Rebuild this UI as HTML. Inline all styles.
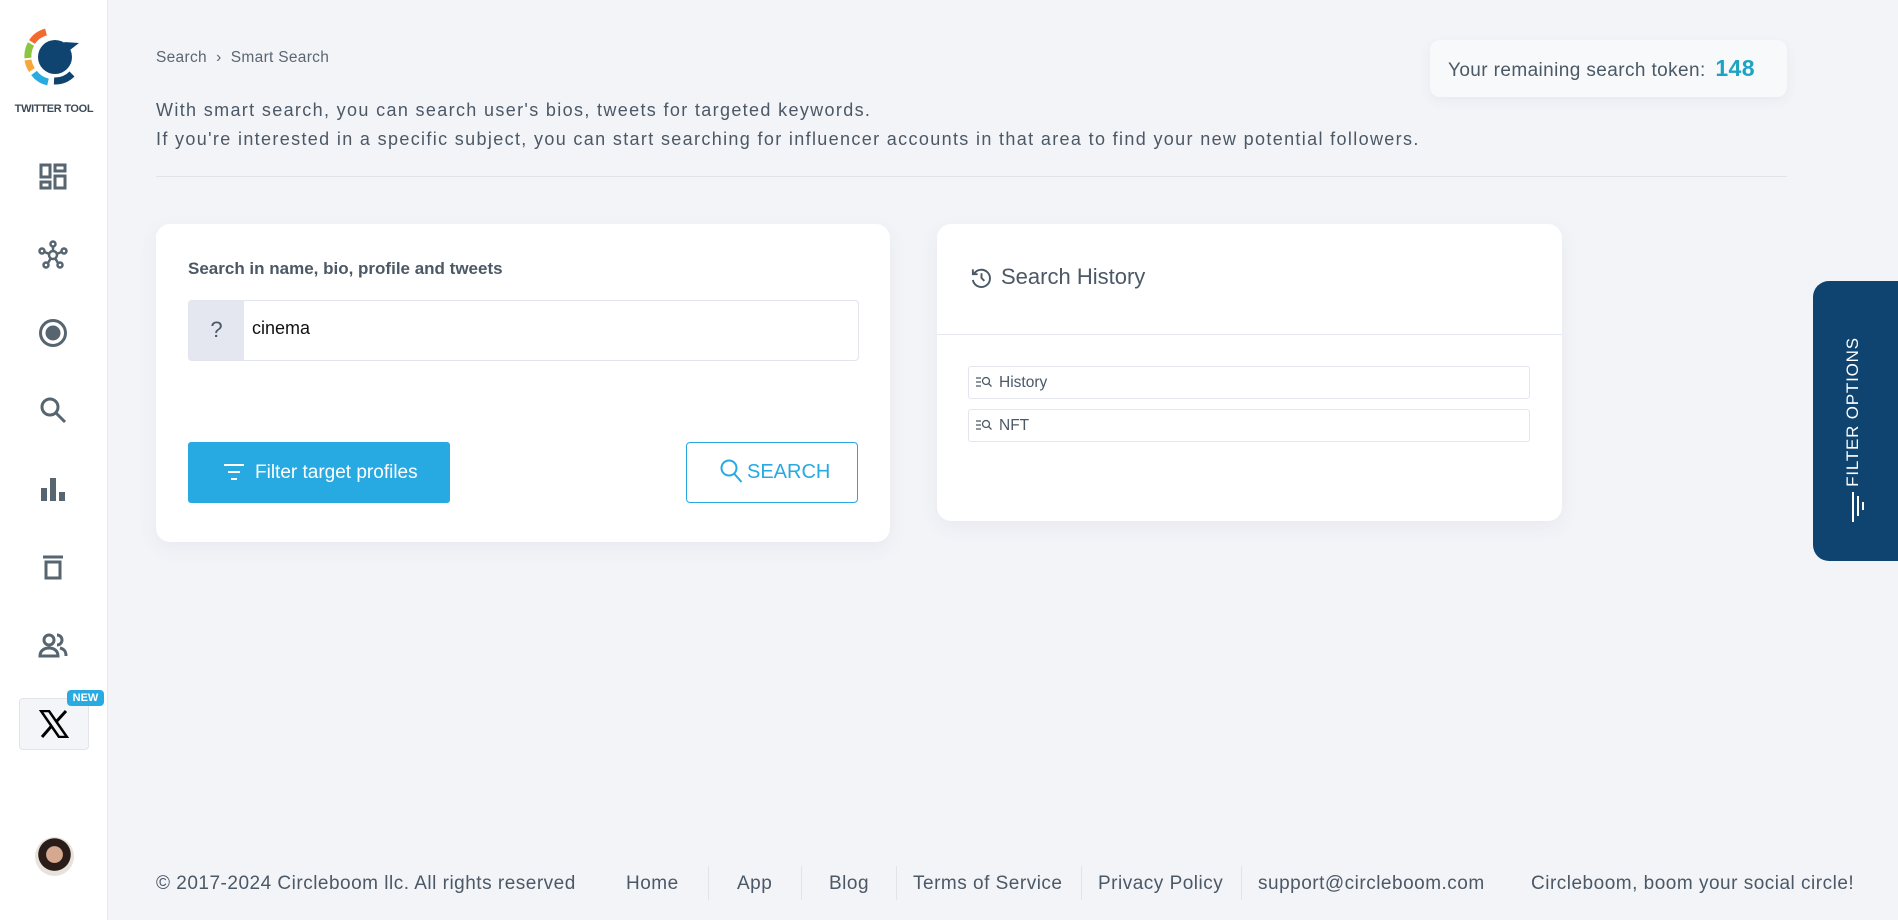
<!DOCTYPE html>
<html><head><meta charset="utf-8"><style>
*{box-sizing:border-box;margin:0;padding:0}
body{width:1898px;height:920px;background:#f3f4f8;font-family:"Liberation Sans",sans-serif;color:#4b5866;position:relative;overflow:hidden}
.a{position:absolute}
.side{left:0;top:0;width:108px;height:920px;background:#fff;border-right:1px solid #e6e7ef}
.ic{position:absolute;left:38px;width:30px;height:30px}
.card{background:#fff;border-radius:14px;box-shadow:0 6px 20px rgba(60,70,100,.06)}
.foot{top:873px;font-size:19px;color:#4b5866;white-space:nowrap;letter-spacing:.5px}
.sep{top:866px;width:1px;height:34px;background:#e2e4ea}
</style></head><body>
<div class="a side">
  <svg class="a" style="left:24px;top:28px" width="58" height="62" viewBox="0 0 58 62">
    <path d="M8 14 A24 24 0 0 1 22 4" stroke="#f26a2e" stroke-width="7" fill="none"/>
    <path d="M4 30 A24 24 0 0 1 7 16" stroke="#8cc63f" stroke-width="7" fill="none"/>
    <path d="M8 42 A24 24 0 0 1 4 32" stroke="#f7a83b" stroke-width="7" fill="none"/>
    <path d="M24 54 A24 24 0 0 1 10 45" stroke="#29abe2" stroke-width="7" fill="none"/>
    <circle cx="31" cy="29" r="17" fill="#0f4470"/>
    <path d="M40 14 L55 15 L46 22Z" fill="#0f4470"/>
    <path d="M30 53 A24 24 0 0 0 48 46" stroke="#0f4470" stroke-width="7" fill="none"/>
  </svg>
  <div class="a" style="left:0;width:108px;top:103px;text-align:center;font-size:11px;font-weight:bold;color:#3d4a57;letter-spacing:-.3px">TWITTER TOOL</div>
  <svg class="ic" style="top:162px" viewBox="0 0 30 30" fill="none" stroke="#56656f" stroke-width="3"><rect x="3" y="3" width="9" height="12"/><rect x="3" y="20" width="9" height="6"/><rect x="17" y="3" width="10" height="6"/><rect x="17" y="14" width="10" height="12"/></svg>
  <svg class="ic" style="top:240px" viewBox="0 0 30 30" fill="none" stroke="#56656f" stroke-width="2.5"><circle cx="15" cy="15" r="4"/><circle cx="15" cy="4" r="2.5"/><circle cx="4" cy="11" r="2.5"/><circle cx="26" cy="11" r="2.5"/><circle cx="8" cy="25" r="2.5"/><circle cx="22" cy="25" r="2.5"/><path d="M15 7v4M6.5 12l5 2M23.5 12l-5 2M10 23l3-5M20 23l-3-5"/></svg>
  <svg class="ic" style="top:318px" viewBox="0 0 30 30"><circle cx="15" cy="15" r="12.5" fill="none" stroke="#56656f" stroke-width="3"/><circle cx="15" cy="15" r="7.5" fill="#56656f"/></svg>
  <svg class="ic" style="top:395px" viewBox="0 0 30 30" fill="none" stroke="#56656f" stroke-width="3"><circle cx="12" cy="12" r="8"/><path d="M18 18l9 9"/></svg>
  <svg class="ic" style="top:474px" viewBox="0 0 30 30" fill="#56656f"><rect x="3" y="14" width="6" height="13"/><rect x="12" y="4" width="6" height="23"/><rect x="21" y="18" width="6" height="9"/></svg>
  <svg class="ic" style="top:552px" viewBox="0 0 30 30" fill="none" stroke="#56656f" stroke-width="3"><path d="M5 5h20"/><rect x="8" y="10" width="14" height="16"/></svg>
  <svg class="ic" style="top:630px" viewBox="0 0 30 30" fill="none" stroke="#56656f" stroke-width="3"><circle cx="11" cy="10" r="5"/><path d="M2 26c0-6 5-8 9-8s9 2 9 8z"/><path d="M19 5a5 5 0 0 1 0 10M22 18c4 1 6 3 6 8"/></svg>
  <div class="a" style="left:19px;top:698px;width:70px;height:52px;border:1px solid #e2e4ea;border-radius:4px;background:#f4f5f9"></div>
  <svg class="a" style="left:39px;top:710px" width="30" height="28" viewBox="0 0 30 28"><path d="M2 1h8l18 26h-8z" fill="none" stroke="#000" stroke-width="2.5"/><path d="M27 1L17 12M3 27l10-11.5" stroke="#000" stroke-width="3"/></svg>
  <div class="a" style="left:67px;top:690px;width:37px;height:16px;background:#29abe2;border-radius:4px;color:#fff;font-size:11px;font-weight:bold;text-align:center;line-height:16px">NEW</div>
  <div class="a" style="left:35px;top:837px;width:39px;height:39px;border-radius:50%;background:radial-gradient(circle at 50% 45%,#d7a890 0 28%,#2a1c18 30% 55%,#e8e2dc 57%)"></div>
</div>

<div class="a" style="left:156px;top:49px;font-size:15.5px;color:#5a6672;letter-spacing:.3px">Search &nbsp;›&nbsp; Smart Search</div>
<div class="a" style="left:156px;top:96px;font-size:18px;line-height:29px;color:#4b5866;letter-spacing:1.35px;white-space:nowrap">With smart search, you can search user's bios, tweets for targeted keywords.<br>If you're interested in a specific subject, you can start searching for influencer accounts in that area to find your new potential followers.</div>
<div class="a" style="left:156px;top:176px;width:1631px;height:1px;background:#e2e4ea"></div>
<div class="a" style="left:1430px;top:40px;width:357px;height:57px;background:#f8f9fb;border-radius:10px;box-shadow:0 4px 12px rgba(60,70,100,.06);font-size:19px;line-height:57px;padding-left:18px;color:#4b5866;letter-spacing:.4px;white-space:nowrap">Your remaining search token: <b style="color:#1ea3c4;font-size:23px;margin-left:4px">148</b></div>

<div class="a card" style="left:156px;top:224px;width:734px;height:318px">
  <div class="a" style="left:32px;top:35px;font-size:17px;font-weight:bold;color:#4b5866">Search in name, bio, profile and tweets</div>
  <div class="a" style="left:32px;top:76px;width:671px;height:61px;border:1px solid #e2e4ee;border-radius:4px;overflow:hidden">
    <div class="a" style="left:0;top:0;width:55px;height:61px;background:#e4e6f0;text-align:center;line-height:58px;font-size:22px;color:#4b5866">?</div>
    <div class="a" style="left:63px;top:17px;font-size:18px;color:#111">cinema</div>
  </div>
  <div class="a" style="left:32px;top:218px;width:262px;height:61px;background:#27a9e1;border-radius:3px;color:#fff;font-size:19px;line-height:61px;padding-left:67px">Filter target profiles</div>
  <svg class="a" style="left:68px;top:239px" width="20" height="18" viewBox="0 0 20 18" stroke="#fff" stroke-width="2"><path d="M0 2h20M4 9h12M7 16h6"/></svg>
  <div class="a" style="left:530px;top:218px;width:172px;height:61px;border:1px solid #27a9e1;border-radius:4px;color:#27a9e1;font-size:20px;line-height:59px;padding-left:60px">SEARCH</div>
  <svg class="a" style="left:564px;top:235px" width="24" height="26" viewBox="0 0 24 26" fill="none" stroke="#27a9e1" stroke-width="2"><circle cx="9" cy="9" r="7.5"/><path d="M14.5 15l7 8"/></svg>
</div>

<div class="a card" style="left:937px;top:224px;width:625px;height:297px">
  <svg class="a" style="left:33px;top:42px" width="23" height="24" viewBox="0 0 24 24" fill="none" stroke="#4b5866" stroke-width="2"><path d="M4 8a9 9 0 1 1-1 6"/><path d="M3 3v5h5"/><path d="M12 7v5l3 3"/></svg>
  <div class="a" style="left:64px;top:40px;font-size:22px;color:#4b5866">Search History</div>
  <div class="a" style="left:0;top:110px;width:625px;height:1px;background:#e6e7f0"></div>
  <div class="a" style="left:31px;top:142px;width:562px;height:33px;border:1px solid #e4e5ef;border-radius:3px;font-size:15.5px;line-height:31px;padding-left:30px">History</div>
  <div class="a" style="left:31px;top:185px;width:562px;height:33px;border:1px solid #e4e5ef;border-radius:3px;font-size:15.5px;line-height:31px;padding-left:30px">NFT</div>
  <svg class="a" style="left:39px;top:152px" width="17" height="12" viewBox="0 0 17 12" fill="none" stroke="#4b5866" stroke-width="1.3"><path d="M0 2h5M0 6h5M0 10h5"/><circle cx="10" cy="5" r="3.5"/><path d="M12.5 7.5l3 3"/></svg>
  <svg class="a" style="left:39px;top:195px" width="17" height="12" viewBox="0 0 17 12" fill="none" stroke="#4b5866" stroke-width="1.3"><path d="M0 2h5M0 6h5M0 10h5"/><circle cx="10" cy="5" r="3.5"/><path d="M12.5 7.5l3 3"/></svg>
</div>

<div class="a" style="left:1813px;top:281px;width:95px;height:280px;background:#0f4470;border-radius:16px 0 0 16px"></div>
<div class="a" style="left:1853px;top:412px;transform:translate(-50%,-50%) rotate(-90deg);color:#fff;font-size:17px;letter-spacing:.8px;white-space:nowrap">FILTER OPTIONS</div>
<svg class="a" style="left:1851px;top:492px" width="16" height="30" viewBox="0 0 16 30" stroke="#fff" stroke-width="2"><path d="M2 0v30M7 4v20M12 10v8"/></svg>

<div class="a foot" style="left:156px">© 2017-2024 Circleboom llc. All rights reserved</div>
<div class="a foot" style="left:626px">Home</div>
<div class="a sep" style="left:708px"></div>
<div class="a foot" style="left:737px">App</div>
<div class="a sep" style="left:801px"></div>
<div class="a foot" style="left:829px">Blog</div>
<div class="a sep" style="left:896px"></div>
<div class="a foot" style="left:913px">Terms of Service</div>
<div class="a sep" style="left:1081px"></div>
<div class="a foot" style="left:1098px">Privacy Policy</div>
<div class="a sep" style="left:1241px"></div>
<div class="a foot" style="left:1258px">support@circleboom.com</div>
<div class="a foot" style="left:1531px">Circleboom, boom your social circle!</div>
</body></html>
